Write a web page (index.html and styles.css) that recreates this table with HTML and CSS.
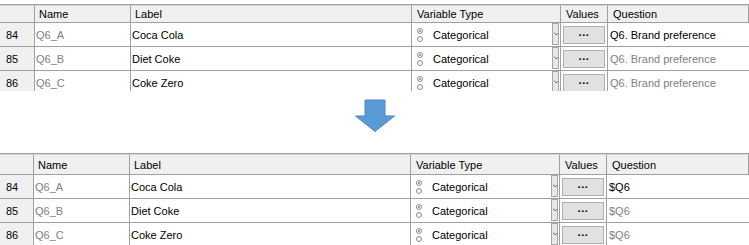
FILE: index.html
```html
<!DOCTYPE html>
<html>
<head>
<meta charset="utf-8">
<link rel="stylesheet" href="styles.css">
</head>
<body>
<div class="panel panel-top">
  <div class="grid">
    <div class="hd"></div><div class="hd">Name</div><div class="hd">Label</div><div class="hd hd-wide">Variable Type</div><div class="hd hd-wide">Values</div><div class="hd hd-wide">Question</div>

    <div class="rh">84</div><div class="c name">Q6_A</div><div class="c label">Coca Cola</div>
    <div class="c vt"><span class="radios"><i class="r on"></i><i class="r"></i></span><span class="vtext">Categorical</span><span class="dd"><svg width="4" height="4" viewBox="0 0 4 4"><path d="M0 0.5 L2.5 3 L3.5 1.5" stroke="#555" fill="none" stroke-width="1"/></svg></span></div>
    <div class="c val"><span class="btn">···</span></div><div class="c q">Q6. Brand preference</div>

    <div class="rh">85</div><div class="c name">Q6_B</div><div class="c label">Diet Coke</div>
    <div class="c vt"><span class="radios"><i class="r on"></i><i class="r"></i></span><span class="vtext">Categorical</span><span class="dd"><svg width="4" height="4" viewBox="0 0 4 4"><path d="M0 0.5 L2.5 3 L3.5 1.5" stroke="#555" fill="none" stroke-width="1"/></svg></span></div>
    <div class="c val"><span class="btn">···</span></div><div class="c q dim">Q6. Brand preference</div>

    <div class="rh">86</div><div class="c name">Q6_C</div><div class="c label">Coke Zero</div>
    <div class="c vt"><span class="radios"><i class="r on"></i><i class="r"></i></span><span class="vtext">Categorical</span><span class="dd"><svg width="4" height="4" viewBox="0 0 4 4"><path d="M0 0.5 L2.5 3 L3.5 1.5" stroke="#555" fill="none" stroke-width="1"/></svg></span></div>
    <div class="c val"><span class="btn">···</span></div><div class="c q dim">Q6. Brand preference</div>
  </div>
</div>

<div class="arrow-area">
  <svg width="41" height="34" viewBox="0 0 41 34">
    <path d="M10 1 H30 V17 H39.5 L20 32.5 L0.5 17 H10 Z" fill="#5b9bd5" stroke="#4a86c0" stroke-width="1"/>
  </svg>
</div>

<div class="panel panel-bottom">
  <div class="grid grid-b">
    <div class="hd"></div><div class="hd">Name</div><div class="hd">Label</div><div class="hd hd-wide">Variable Type</div><div class="hd hd-wide">Values</div><div class="hd hd-wide">Question</div>

    <div class="rh">84</div><div class="c name">Q6_A</div><div class="c label">Coca Cola</div>
    <div class="c vt"><span class="radios"><i class="r on"></i><i class="r"></i></span><span class="vtext">Categorical</span><span class="dd"><svg width="4" height="4" viewBox="0 0 4 4"><path d="M0 0.5 L2.5 3 L3.5 1.5" stroke="#555" fill="none" stroke-width="1"/></svg></span></div>
    <div class="c val"><span class="btn">···</span></div><div class="c q">$Q6</div>

    <div class="rh">85</div><div class="c name">Q6_B</div><div class="c label">Diet Coke</div>
    <div class="c vt"><span class="radios"><i class="r on"></i><i class="r"></i></span><span class="vtext">Categorical</span><span class="dd"><svg width="4" height="4" viewBox="0 0 4 4"><path d="M0 0.5 L2.5 3 L3.5 1.5" stroke="#555" fill="none" stroke-width="1"/></svg></span></div>
    <div class="c val"><span class="btn">···</span></div><div class="c q dim">$Q6</div>

    <div class="rh">86</div><div class="c name">Q6_C</div><div class="c label">Coke Zero</div>
    <div class="c vt"><span class="radios"><i class="r on"></i><i class="r"></i></span><span class="vtext">Categorical</span><span class="dd"><svg width="4" height="4" viewBox="0 0 4 4"><path d="M0 0.5 L2.5 3 L3.5 1.5" stroke="#555" fill="none" stroke-width="1"/></svg></span></div>
    <div class="c val"><span class="btn">···</span></div><div class="c q dim">$Q6</div>
  </div>
</div>
</body>
</html>
```

FILE: styles.css
```css
html, body {
  margin: 0;
  padding: 0;
  background: #ffffff;
}
body {
  width: 749px;
  height: 245px;
  overflow: hidden;
  font-family: "Liberation Sans", Arial, sans-serif;
  font-size: 11px;
  color: #000;
}
.panel-top {
  padding-top: 4px;
  height: 87px;
  overflow: hidden;
}
.panel-bottom {
  height: 92px;
  overflow: hidden;
}
.grid {
  display: grid;
  grid-template-columns: 35px 96px 281px 149px 47px 1fr;
  grid-template-rows: 18px 24px 24px 24px;
  border-top: 1px solid #a0a0a0;
  box-shadow: inset 0 1px 0 #c8c8c8;
}
.grid-b {
  grid-template-columns: 34px 96px 281px 149px 47px 1fr;
  grid-template-rows: 21px 24px 24px 24px;
}
.hd {
  background: #f0f0f0;
  border-right: 1px solid #a0a0a0;
  border-bottom: 1px solid #a0a0a0;
  border-top: 1px solid #d4d4d4;
  display: flex;
  align-items: center;
  padding-left: 4px;
  white-space: nowrap;
}
.hd-wide { padding-left: 5px; }
.hd:last-child { border-right: none; }
.rh {
  background: #f0f0f0;
  border-right: 1px solid #a0a0a0;
  border-bottom: 1px solid #a0a0a0;
  display: flex;
  align-items: center;
  padding-left: 6px;
}
.c {
  border-right: 1px solid #a0a0a0;
  border-bottom: 1px solid #a0a0a0;
  display: flex;
  align-items: center;
  white-space: nowrap;
  overflow: hidden;
}
.name { color: #808080; padding-left: 1px; }
.label { padding-left: 1px; }
.q { border-right: none; padding-left: 2px; }
.dim { color: #808080; }
.vt {
  position: relative;
  padding-left: 5px;
}
.radios {
  display: flex;
  flex-direction: column;
  gap: 2px;
  margin-right: 10px;
}
.r {
  display: block;
  width: 4px;
  height: 4px;
  border: 1px solid #8c8c9c;
  border-radius: 50%;
  background: #fafafa;
  position: relative;
}
.r.on::after {
  content: "";
  position: absolute;
  left: 1px;
  top: 1px;
  width: 2px;
  height: 2px;
  border-radius: 50%;
  background: #2fbf2f;
}
.vtext { flex: 1; }
.dd {
  align-self: stretch;
  width: 5px;
  margin: 0 1px 1px 0;
  background: #e8e8e8;
  border: 1px solid #a6a6a6;
  display: flex;
  align-items: center;
  justify-content: center;
}
.val { padding-left: 2px; }
.btn {
  width: 40px;
  height: 16px;
  background: #e1e1e1;
  border: 1px solid #adadad;
  display: flex;
  align-items: center;
  justify-content: center;
  font-weight: bold;
  font-size: 11px;
  letter-spacing: 0;
}
.arrow-area {
  height: 62px;
  display: flex;
  justify-content: center;
  align-items: flex-start;
  padding-left: 1px;
  box-sizing: border-box;
  padding-top: 8px;
}
```
